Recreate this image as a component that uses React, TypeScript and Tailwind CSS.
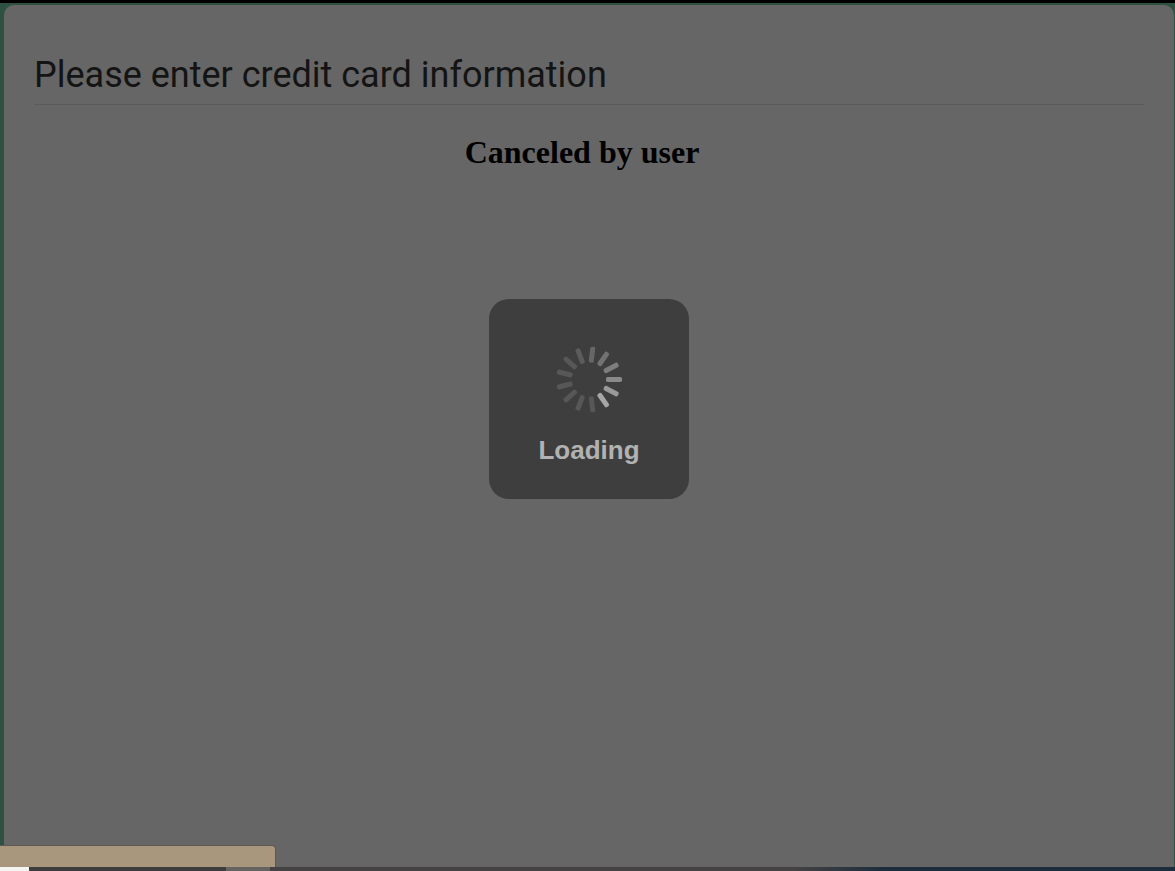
const BLADES = 13;

const bladeColors = [
  "#8a8a8a",
  "#999999",
  "#a6a6a6",
  "#575757",
  "#575757",
  "#575757",
  "#575757",
  "#575757",
  "#575757",
  "#5c5c5c",
  "#666666",
  "#727272",
  "#7d7d7d",
];

function Spinner() {
  return (
    <svg viewBox="-35 -35.5 70 70" className="size-[70px]" aria-hidden="true">
      {bladeColors.map((color, i) => (
        <rect
          key={i}
          x="17"
          y="-2.5"
          width="16"
          height="5"
          rx="1.8"
          fill={color}
          transform={`rotate(${(i * 360) / BLADES})`}
        />
      ))}
    </svg>
  );
}

function LoadingBox() {
  return (
    <div
      role="status"
      className="mx-auto mt-[127px] flex size-[200px] flex-col items-center rounded-[20px] bg-[#3e3e3e] pt-[45px]"
    >
      <Spinner />
      <p className="mt-5 font-['Liberation_Sans',Arial,sans-serif] text-[26px] leading-8 font-bold text-[#b2b2b2]">
        Loading
      </p>
    </div>
  );
}

function StatusTab() {
  return (
    <div className="absolute bottom-0 left-0 h-[22px] w-[276px] rounded-tr border-t border-r border-[#5c5852] bg-[#a8967d]" />
  );
}

function BottomStrip() {
  return (
    <footer className="flex h-1">
      <div className="w-[29px] bg-[#f4f4f2]" />
      <div className="w-[197px] bg-[#3d3d3d]" />
      <div className="w-11 bg-[#666461]" />
      <div className="flex-1 bg-linear-to-r from-[#444242] via-[#444242] via-58% to-[#1c2d3e] to-68%" />
    </footer>
  );
}

export default function App() {
  return (
    <div className="flex min-h-screen flex-col bg-black pt-[3px]">
      <div className="relative flex flex-1 flex-col bg-[#2f5142] pt-0.5 pr-px pl-1">
        <main className="flex-1 rounded-t-[10px] bg-[#666666] px-[30px] pt-[50px]">
          <h1 className="border-b border-[#5b5b5b] pb-[9px] font-[Roboto,sans-serif] text-[36px] leading-10 text-[#141414]">
            Please enter credit card information
          </h1>
          <h2 className="mt-[27px] pr-3.5 text-center font-['Liberation_Serif','Times_New_Roman',serif] text-[32px] leading-10 font-bold text-black">
            Canceled by user
          </h2>
          <LoadingBox />
        </main>
        <StatusTab />
      </div>
      <BottomStrip />
    </div>
  );
}
